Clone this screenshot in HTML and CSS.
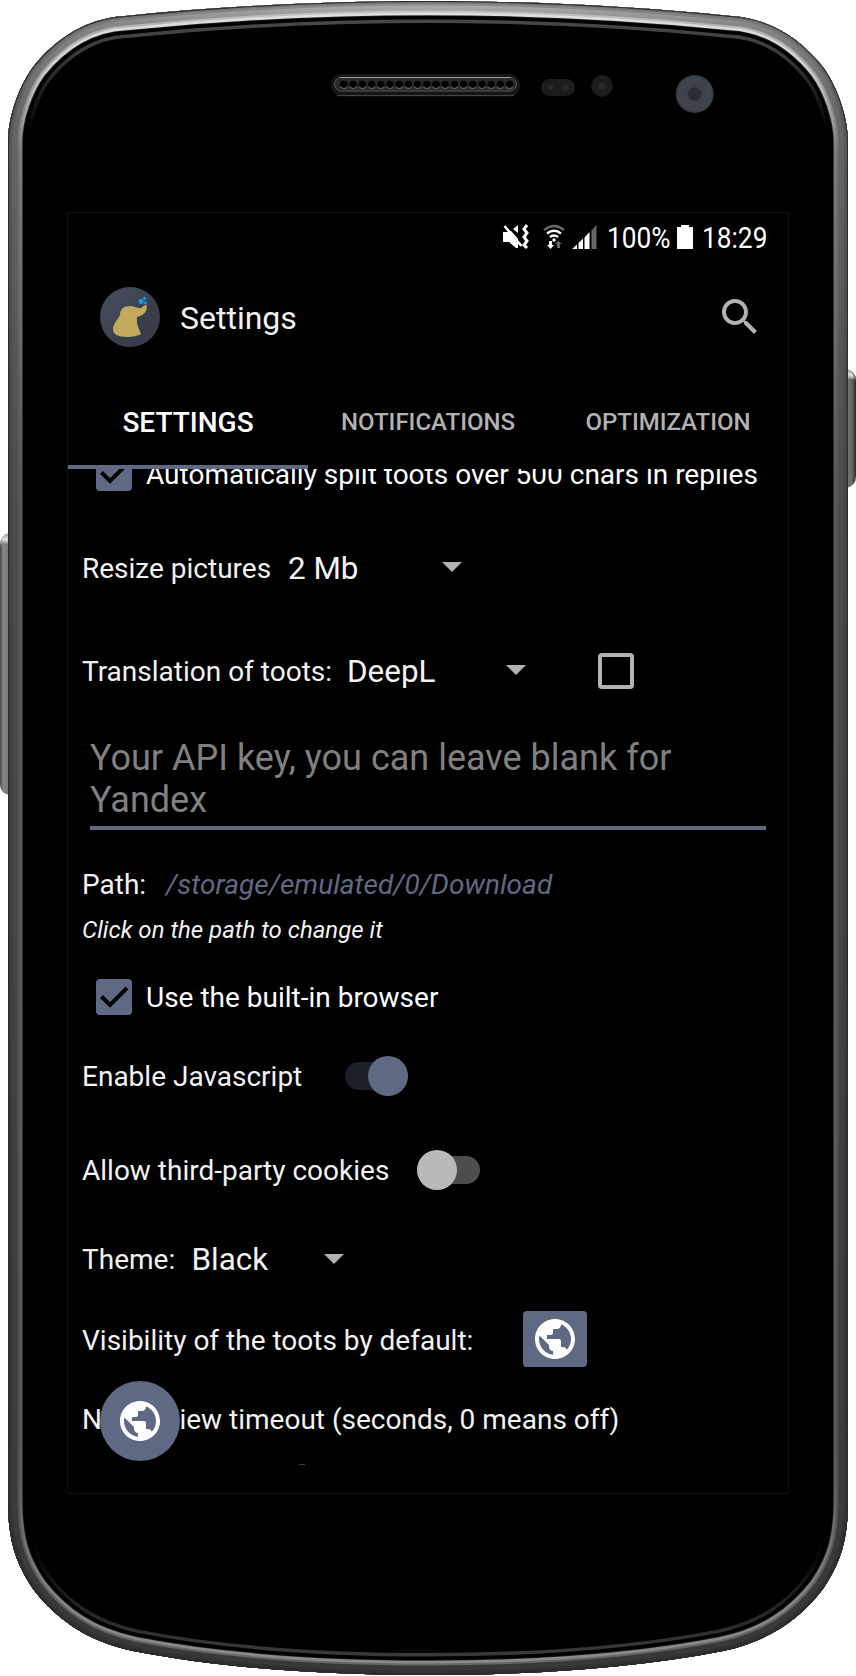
FILE: index.html
```html
<!DOCTYPE html>
<html lang="en">
<head>
<meta charset="utf-8">
<title>Settings</title>
<link rel="stylesheet" href="styles.css">
</head>
<body>
<main class="device">
  <svg class="shell" viewBox="0 0 856 1676" width="856" height="1676" aria-hidden="true">
    <defs>
      <path id="body" d="M8 142C8 117 19 86 33 67C57 37 88 18 125 16C225 6 330 1 428 1C526 1 631 6 731 16C768 18 799 37 823 67C837 86 848 117 848 142V1500C848 1540 841 1562 823 1589C799 1620 769 1641 723 1651C630 1669 526 1675 428 1675C330 1675 226 1669 133 1651C87 1641 57 1620 33 1589C15 1562 8 1540 8 1500Z"/>
      <clipPath id="bodyClip"><use href="#body"/></clipPath>
      <linearGradient id="rimMid" gradientUnits="userSpaceOnUse" x1="0" y1="0" x2="0" y2="1676">
        <stop offset="0" stop-color="#b4b4b4"/><stop offset=".015" stop-color="#858585"/><stop offset=".07" stop-color="#666"/><stop offset=".3" stop-color="#4c4c4c"/><stop offset="1" stop-color="#383838"/>
      </linearGradient>
      <linearGradient id="rimEdge" gradientUnits="userSpaceOnUse" x1="0" y1="0" x2="0" y2="1676">
        <stop offset="0" stop-color="#777"/><stop offset=".07" stop-color="#555"/><stop offset=".3" stop-color="#404040"/><stop offset="1" stop-color="#2e2e2e"/>
      </linearGradient>
      <linearGradient id="rimLight" gradientUnits="userSpaceOnUse" x1="0" y1="0" x2="0" y2="1676">
        <stop offset="0" stop-color="#e2e2e2"/><stop offset=".04" stop-color="#cfcfcf"/><stop offset=".09" stop-color="#7d7d7d"/><stop offset=".3" stop-color="#585858"/><stop offset=".88" stop-color="#5c5c5c"/><stop offset=".95" stop-color="#808080"/><stop offset="1" stop-color="#8e8e8e"/>
      </linearGradient>
      <linearGradient id="glint" gradientUnits="userSpaceOnUse" x1="0" y1="0" x2="0" y2="1676">
        <stop offset="0" stop-color="#505050"/><stop offset=".03" stop-color="#3c3c3c"/><stop offset=".08" stop-color="#000"/><stop offset=".92" stop-color="#000"/><stop offset=".97" stop-color="#2c2c2c"/><stop offset="1" stop-color="#444"/>
      </linearGradient>
      <linearGradient id="keyLeft" x1="0" x2="1" y1="0" y2="0">
        <stop offset="0" stop-color="#444"/><stop offset=".3" stop-color="#858585"/><stop offset="1" stop-color="#777"/>
      </linearGradient>
      <linearGradient id="keyRight" x1="0" x2="1" y1="0" y2="0">
        <stop offset="0" stop-color="#777"/><stop offset=".6" stop-color="#666"/><stop offset="1" stop-color="#2a2a2a"/>
      </linearGradient>
      <linearGradient id="keyCap" x1="0" x2="0" y1="0" y2="1">
        <stop offset="0" stop-color="#999"/><stop offset=".6" stop-color="#e2e2e2"/><stop offset="1" stop-color="#888"/>
      </linearGradient>
      <radialGradient id="lens"><stop offset="0" stop-color="#3a3f47"/><stop offset=".85" stop-color="#40454d"/><stop offset="1" stop-color="#33373d"/></radialGradient>
      <pattern id="holes" patternUnits="userSpaceOnUse" x="339.4" y="79" width="9.2" height="11">
        <circle cx="4.6" cy="5.5" r="3.8" fill="#000"/><path d="M1.300 7.500A3.800 3.800 0 0 0 7.900 7.500" fill="none" stroke="#666"/>
      </pattern>
    </defs>
    <path d="M10 533Q0 535 0 546V784Q0 794 10 795Z" fill="url(#keyLeft)"/>
    <path d="M9 533Q2 535 1 544H9Z" fill="url(#keyCap)"/>
    <path d="M846 369Q856 371 856 381V476Q856 486 846 488Z" fill="url(#keyRight)"/>
    <path d="M847 369Q853 371 855 379H847Z" fill="url(#keyCap)"/>
    <use href="#body"/>
    <g clip-path="url(#bodyClip)" fill="none">
      <use href="#body" stroke="url(#glint)" stroke-width="44"/>
      <use href="#body" stroke="#000" stroke-width="37"/>
      <use href="#body" stroke="#222" stroke-width="30"/>
      <use href="#body" stroke="url(#rimLight)" stroke-width="28.500"/>
      <use href="#body" stroke="url(#rimMid)" stroke-width="23" stroke-opacity=".45"/>
      <use href="#body" stroke="url(#rimMid)" stroke-width="19"/>
      <use href="#body" stroke="url(#rimEdge)" stroke-width="9" stroke-opacity=".6"/>
      <use href="#body" stroke="url(#rimEdge)" stroke-width="5"/>
      <use href="#body" stroke="#2c2c2c" stroke-width="2"/>
    </g>
    <rect x="331" y="74" width="189" height="22.500" rx="10" fill="#161616"/>
    <path d="M337 95.500H514" stroke="#444"/>
    <rect x="334.500" y="77.500" width="182" height="13.500" rx="6.700" fill="#2a2a2a" stroke="#555"/>
    <path d="M340 77.500H511" stroke="#999"/>
    <rect x="339.400" y="79" width="174.800" height="11" fill="url(#holes)"/>
    <rect x="541" y="79" width="34" height="17" rx="8.500" fill="#1c1c1c"/>
    <circle cx="550.500" cy="87.500" r="3" fill="#282828"/><circle cx="565.500" cy="87.500" r="3" fill="#282828"/>
    <circle cx="602" cy="86" r="10.700" fill="#1c1c1c"/><circle cx="602" cy="86" r="3.800" fill="#272727"/>
    <circle cx="694.700" cy="94" r="19" fill="url(#lens)"/><circle cx="694.700" cy="94" r="6.800" fill="#292e35"/>
  </svg>

  <section class="screen">
    <div class="status">
      <svg class="status-mute" viewBox="0 0 26 26" width="26" height="26"><path d="M0 8H6L9 6L15 13V1L15 24L13 24L6 18H0Z" fill="#fff"/><path d="M10 5L15 1V9Z" fill="#fff"/><path d="M4 1L22 21" stroke="#000" stroke-width="2"/><path d="M1.500 2L18.500 22" stroke="#fff" stroke-width="2.500"/><path d="M24 1L21 5L24 9L21 13L24 17L21 21L24 24" fill="none" stroke="#fff" stroke-width="3"/></svg>
      <svg class="status-wifi" viewBox="0 0 22 26" width="22" height="26"><g fill="none" stroke="#fff" stroke-width="2.500"><path d="M1 6Q11-2 21 6" stroke="#666"/><path d="M4 9.500Q11 4 18 9.500"/><path d="M7 13Q11 10 15 13"/></g><circle cx="11" cy="16" r="1.700" fill="#fff"/><path d="M6 17H9V21H11L7.500 25L4 21H6Z" fill="#fff"/><path d="M14 24H17V20H19L15.500 17L12 20H14Z" fill="#666"/></svg>
      <svg class="status-signal" viewBox="0 0 26 26" width="26" height="26"><path d="M0 25L5 20.500V25ZM6.500 25V19L11 14.500V25ZM12.500 25V13.500L17.500 8V25Z" fill="#fff"/><path d="M19.500 25V6.500L24.500 1V25Z" fill="#666"/></svg>
      <span class="status-text status-percent">100%</span>
      <svg class="status-battery" viewBox="0 0 16 26" width="16" height="26"><path d="M4 1H12V3H16V25H0V3H4Z" fill="#fff"/></svg>
      <span class="status-text">18:29</span>
    </div>

    <header class="toolbar">
      <svg class="logo" viewBox="0 0 60 60" width="60" height="60"><defs><linearGradient id="disc" x1="0" y1="0" x2="1" y2="1"><stop offset="0" stop-color="#4b5060"/><stop offset=".6" stop-color="#3a3f4e"/><stop offset="1" stop-color="#353948"/></linearGradient></defs><circle cx="30" cy="30" r="30" fill="url(#disc)"/><path d="M20 28C20 22 24 19 30 19C34 19 38 22 41 21C43 20.500 43 18 46.500 18C48 24 44 28 37 30C36 36 39 42 41 47C38 49 32 50 27 50C18 50 13 47 13 43C13 36 18 33 20 28Z" fill="#c3a95b"/><circle cx="41" cy="14.500" r="2.500" fill="#1a9be0"/><circle cx="44.500" cy="11.300" r="1.600" fill="#1a9be0"/><circle cx="45.300" cy="16" r="1.400" fill="#1a9be0"/></svg>
      <h1 class="title">Settings</h1>
      <svg class="search" viewBox="0 0 24 24" width="48" height="48"><path fill="#b2b2b2" d="M15.500 14h-.79l-.28-.27C15.410 12.590 16 11.110 16 9.500 16 5.910 13.090 3 9.500 3S3 5.910 3 9.500 5.910 16 9.500 16c1.610 0 3.090-.59 4.230-1.570l.27.28v.79l5 4.990L20.490 19l-4.990-5zm-6 0C7.010 14 5 11.990 5 9.500S7.010 5 9.500 5 14 7.010 14 9.500 11.990 14 9.500 14z"/></svg>
    </header>

    <nav class="tabs">
      <a class="tab tab-active">SETTINGS</a>
      <a class="tab">NOTIFICATIONS</a>
      <a class="tab">OPTIMIZATION</a>
    </nav>

    <div class="list">
      <div class="row row-split"><svg class="check" viewBox="0 0 36 36" width="36" height="36"><rect width="36" height="36" rx="4" fill="#606984"/><path d="M5.500 17.500L14 26L31 9" fill="none" stroke="#000" stroke-width="4"/></svg><span class="check-label">Automatically split toots over 500 chars in replies</span></div>
      <div class="row row-resize"><span class="label">Resize pictures</span><span class="value">2 Mb</span><i class="arrow"></i></div>
      <div class="row row-translate"><span class="label">Translation of toots:</span><span class="value">DeepL</span><i class="arrow"></i><i class="box"></i></div>
      <div class="field">Your API key, you can leave blank for Yandex</div>
      <div class="row row-path"><span class="label">Path:</span><em class="path">/storage/emulated/0/Download</em></div>
      <div class="row row-hint"><em>Click on the path to change it</em></div>
      <div class="row row-browser"><svg class="check" viewBox="0 0 36 36" width="36" height="36"><rect width="36" height="36" rx="4" fill="#606984"/><path d="M5.500 17.500L14 26L31 9" fill="none" stroke="#000" stroke-width="4"/></svg><span class="check-label">Use the built-in browser</span></div>
      <div class="row row-script"><span class="label">Enable Javascript</span><span class="switch switch-on"><i class="thumb"></i></span></div>
      <div class="row row-cookies"><span class="label">Allow third-party cookies</span><span class="switch"><i class="thumb"></i></span></div>
      <div class="row row-theme"><span class="label">Theme:</span><span class="value">Black</span><i class="arrow"></i></div>
      <div class="row row-visibility"><span class="label">Visibility of the toots by default:</span><span class="globe-button"><svg viewBox="0 0 24 24" width="48" height="48"><path id="globe" fill="#fff" d="M12 2C6.480 2 2 6.480 2 12s4.480 10 10 10 10-4.480 10-10S17.520 2 12 2zm-1 17.930c-3.950-.49-7-3.850-7-7.930 0-.62.080-1.210.210-1.790L9 15v1c0 1.100.9 2 2 2v1.930zm6.900-2.540c-.26-.81-1-1.390-1.900-1.390h-1v-3c0-.55-.45-1-1-1H8v-2h2c.55 0 1-.45 1-1V7h2c1.100 0 2-.9 2-2v-.41c2.930 1.190 5 4.060 5 7.410 0 2.080-.8 3.970-2.100 5.390z"/></svg></span></div>
      <div class="row row-timeout"><span class="label">NSFW view timeout (seconds, 0 means off)</span></div>
      <i class="cut"></i>
    </div>
    <span class="fab"><svg viewBox="0 0 24 24" width="48" height="48"><use href="#globe"/></svg></span>
  </section>
</main>
</body>
</html>
```
FILE: styles.css
```css
body {
  margin: 0;
  background: #fff;
  font-family: Roboto, "Noto Sans", sans-serif;
  font-size: 28px;
  color: #f2f2f2;
}

svg { display: block; flex: none; }

.device {
  display: grid;
  width: 856px;
  height: 1676px;
  overflow: hidden;
}

.shell, .screen { grid-area: 1 / 1; }

.screen {
  position: relative;
  box-sizing: border-box;
  width: 722px;
  height: 1282px;
  margin: 212px 0 0 67px;
  border: 1px solid #04170f;
  background: #000;
  white-space: nowrap;
}

.status {
  display: flex;
  align-items: center;
  height: 48px;
  padding-left: 435px;
  color: #fff;
}

.status-wifi { margin-left: 14px; }
.status-signal { margin-left: 7px; }
.status-battery { margin-left: 8px; }
.status-text {
  width: 64px;
  margin-left: 9px;
  padding-top: 1px;
  font-size: 29.5px;
  transform: scaleX(.89);
  transform-origin: 0 50%;
}
.status-percent { width: 62px; }

.toolbar {
  display: flex;
  align-items: center;
  height: 112px;
  padding: 0 24px 0 32px;
}

.title {
  margin: 2px auto 0 20px;
  font-size: 32px;
  font-weight: 400;
}

.tabs {
  display: grid;
  grid-template-columns: repeat(3, 240px);
  height: 96px;
}

.tab {
  box-sizing: border-box;
  height: 96px;
  border-bottom: 4px solid transparent;
  padding-top: 4px;
  line-height: 91px;
  text-align: center;
  font-size: 24px;
  font-weight: 500;
  color: #b2b2b2;
}
.tab-active { font-size: 28px; color: #fff; border-color: #606984; }

.list { height: 1021px; overflow: hidden; }

.row { display: flex; align-items: center; padding-left: 14px; }
.label, .value, .arrow, .box, .switch, .globe-button { flex: none; }
.value { font-size: 31.4px; }

.check { margin-left: 14px; }
.check-label { margin-left: 14px; padding-top: 2px; color: #fff; }

.arrow {
  margin-top: -2px;
  border: 10px solid transparent;
  border-width: 10px 10px 0;
  border-top-color: #b2b2b2;
}

.row-split { height: 36px; margin-top: -14px; }
.row-resize { height: 104px; margin-top: 25px; }
.row-resize .label { width: 206px; }
.row-resize .value { width: 154px; }
.row-translate { height: 102px; }
.row-translate .label { width: 265px; }
.row-translate .value { width: 159px; }

.box {
  box-sizing: border-box;
  width: 36px;
  height: 36px;
  margin-left: 72px;
  border: 4px solid #b2b2b2;
  border-radius: 4px;
}

.field {
  width: 676px;
  margin: 15px 0 0 22px;
  padding-bottom: 5px;
  border-bottom: 4px solid #606984;
  font-size: 36px;
  line-height: 42px;
  color: #808080;
  white-space: normal;
}

.row-path { height: 47px; margin-top: 31px; }
.row-path .label { width: 84px; }
.path { color: #606984; letter-spacing: .03px; }
.row-hint { height: 44px; font-size: 24px; }
.row-browser { height: 89px; }
.row-script { height: 71px; }
.row-script .label { width: 263px; }
.row-cookies { height: 117px; }
.row-cookies .label { width: 334.5px; }

.switch {
  display: flex;
  align-items: center;
  width: 63px;
  height: 28px;
  margin-top: -2px;
  border-radius: 14px;
  background: #4d4d4d;
}
.thumb { width: 40px; height: 40px; border-radius: 50%; background: #b9b9b9; }
.switch-on { justify-content: flex-end; background: #1d1f28; }
.switch-on .thumb { background: #606984; }

.row-theme { height: 61px; }
.row-theme .label { width: 109.5px; }
.row-theme .value { width: 132.5px; }
.row-visibility { height: 100px; }
.row-visibility .label { width: 441px; }

.globe-button {
  display: grid;
  place-items: center;
  width: 64px;
  height: 56px;
  margin-top: -2px;
  border-radius: 4px;
  background: #606984;
}

.row-timeout { height: 59px; }

.cut {
  display: block;
  width: 6px;
  height: 1px;
  margin: 15px 0 0 231px;
  background: #3a3f4f;
}

.fab {
  position: absolute;
  left: 32px;
  top: 1168px;
  display: grid;
  place-items: center;
  width: 80px;
  height: 80px;
  border-radius: 50%;
  background: #606984;
}
```
